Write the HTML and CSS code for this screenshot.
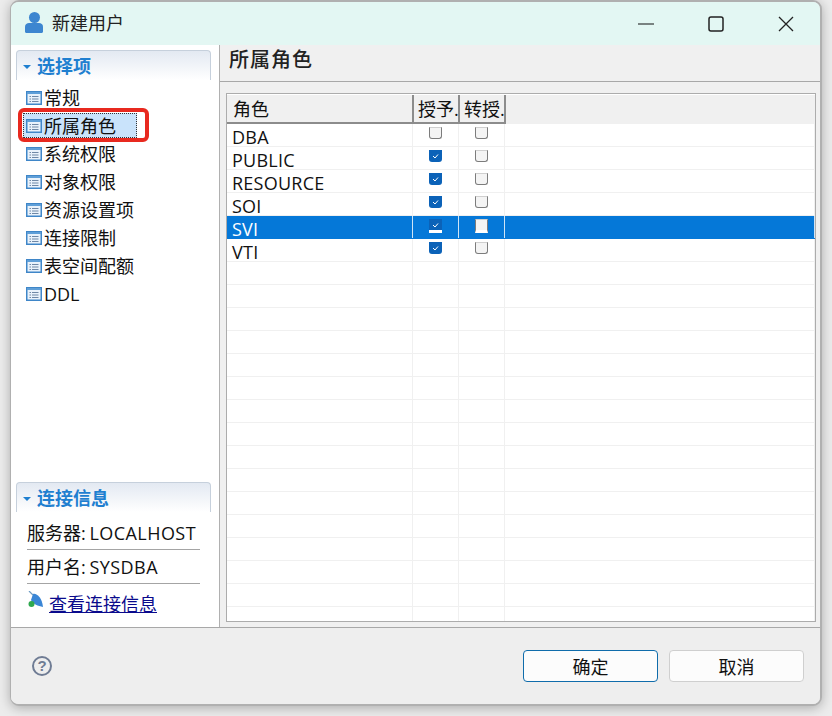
FILE: index.html
```html
<!DOCTYPE html>
<html lang="zh">
<head>
<meta charset="utf-8">
<title>新建用户</title>
<link rel="stylesheet" href="styles.css">
</head>
<body>
<svg class="defs" width="0" height="0" aria-hidden="true">
  <symbol id="page" viewBox="0 0 16 14">
    <rect x=".75" y=".75" width="14.500" height="12.500" fill="#e9f2fb" stroke="#3f86c8" stroke-width="1.500"/>
    <rect x="1" y="1" width="14" height="2" fill="#5f9fd8"/>
    <path d="M3.500 5.500h1.500M6 5.500h6.500M3.500 8h1.500M6 8h6.500M3.500 10.500h1.500M6 10.500h6.500" stroke="#6f88a6"/>
  </symbol>
  <symbol id="tick" viewBox="0 0 13 12">
    <path d="M4 6l2 2 3-3.500" fill="none" stroke="#fff" stroke-width="1"/>
  </symbol>
</svg>
<div class="window">
  <header class="titlebar">
    <svg class="user-icon" width="18" height="21" viewBox="0 0 18 21"><ellipse cx="9.500" cy="5.500" rx="5.500" ry="5.500" fill="#3d86d0"/><path d="M0 14.500C0 12.500 2 11 4 11h10c2 0 4 1.500 4 3.500V19.500c0 .8-.6 1.500-1.500 1.500h-15C.6 21 0 20.300 0 19.500z" fill="#3d86d0"/></svg>
    <span class="title">新建用户</span>
    <div class="win-controls">
      <svg width="16" height="16" viewBox="0 0 16 16" class="ctl-min"><path d="M0 8h16" stroke="#111" stroke-width="1.200"/></svg>
      <svg width="16" height="16" viewBox="0 0 16 16" class="ctl-max"><rect x="1" y="1" width="14" height="14" rx="2" fill="none" stroke="#222" stroke-width="1.500"/></svg>
      <svg width="16" height="16" viewBox="0 0 16 16" class="ctl-close"><path d="M1 1l14 14M15 1L1 15" stroke="#222" stroke-width="1.300"/></svg>
    </div>
  </header>
  <div class="body">
    <aside class="side">
      <div class="section-head"><span class="caret"></span>选择项</div>
      <ul class="nav">
        <li class="nav-item"><svg class="page"><use href="#page"/></svg><span class="nav-text">常规</span></li>
        <li class="nav-item active"><svg class="page"><use href="#page"/></svg><span class="nav-text">所属角色</span></li>
        <li class="nav-item"><svg class="page"><use href="#page"/></svg><span class="nav-text">系统权限</span></li>
        <li class="nav-item"><svg class="page"><use href="#page"/></svg><span class="nav-text">对象权限</span></li>
        <li class="nav-item"><svg class="page"><use href="#page"/></svg><span class="nav-text">资源设置项</span></li>
        <li class="nav-item"><svg class="page"><use href="#page"/></svg><span class="nav-text">连接限制</span></li>
        <li class="nav-item"><svg class="page"><use href="#page"/></svg><span class="nav-text">表空间配额</span></li>
        <li class="nav-item"><svg class="page"><use href="#page"/></svg><span class="nav-text">DDL</span></li>
      </ul>
      <div class="section-head"><span class="caret"></span>连接信息</div>
      <div class="info-line first">服务器: <span class="latin">LOCALHOST</span></div>
      <div class="info-line">用户名: <span class="latin">SYSDBA</span></div>
      <div class="info-link">
        <svg class="link-icon" width="16" height="17" viewBox="0 0 16 17"><path d="M5 3C9 2 14 7 15 16 10 15 5 13 3 9z" fill="#3a86d6"/><path d="M1 0l4 4" fill="none" stroke="#6f9cc4" stroke-width="1.200"/><circle cx="3.500" cy="13" r="3" fill="#2fa84f"/></svg>
        <a href="#">查看连接信息</a>
      </div>
    </aside>
    <main class="main">
      <h2 class="page-title">所属角色</h2>
      <div class="table">
        <div class="thead">
          <div class="th th-role">角色</div>
          <div class="th th-c">授予.</div>
          <div class="th th-c">转授.</div>
        </div>
        <div class="row"><span class="c-role">DBA</span><span class="c-chk"><i class="box"></i></span><span class="c-chk"><i class="box"></i></span><span></span></div>
        <div class="row"><span class="c-role">PUBLIC</span><span class="c-chk"><i class="box on"><svg><use href="#tick"/></svg></i></span><span class="c-chk"><i class="box"></i></span><span></span></div>
        <div class="row"><span class="c-role">RESOURCE</span><span class="c-chk"><i class="box on"><svg><use href="#tick"/></svg></i></span><span class="c-chk"><i class="box"></i></span><span></span></div>
        <div class="row"><span class="c-role">SOI</span><span class="c-chk"><i class="box on"><svg><use href="#tick"/></svg></i></span><span class="c-chk"><i class="box"></i></span><span></span></div>
        <div class="row selected"><span class="c-role">SVI</span><span class="c-chk"><i class="box on"><svg><use href="#tick"/></svg></i></span><span class="c-chk"><i class="box"></i></span><span></span></div>
        <div class="row"><span class="c-role">VTI</span><span class="c-chk"><i class="box on"><svg><use href="#tick"/></svg></i></span><span class="c-chk"><i class="box"></i></span><span></span></div>
        <div class="row"><span></span><span></span><span></span><span></span></div>
        <div class="row"><span></span><span></span><span></span><span></span></div>
        <div class="row"><span></span><span></span><span></span><span></span></div>
        <div class="row"><span></span><span></span><span></span><span></span></div>
        <div class="row"><span></span><span></span><span></span><span></span></div>
        <div class="row"><span></span><span></span><span></span><span></span></div>
        <div class="row"><span></span><span></span><span></span><span></span></div>
        <div class="row"><span></span><span></span><span></span><span></span></div>
        <div class="row"><span></span><span></span><span></span><span></span></div>
        <div class="row"><span></span><span></span><span></span><span></span></div>
        <div class="row"><span></span><span></span><span></span><span></span></div>
        <div class="row"><span></span><span></span><span></span><span></span></div>
        <div class="row"><span></span><span></span><span></span><span></span></div>
        <div class="row"><span></span><span></span><span></span><span></span></div>
        <div class="row"><span></span><span></span><span></span><span></span></div>
        <div class="row"><span></span><span></span><span></span><span></span></div>
      </div>
    </main>
  </div>
  <footer class="footer">
    <span class="help">?</span>
    <div class="buttons">
      <button class="btn default">确定</button>
      <button class="btn">取消</button>
    </div>
  </footer>
</div>
</body>
</html>
```
FILE: styles.css
```css
*, *::before, *::after { box-sizing: border-box; }
html, body { margin: 0; height: 100%; }
body {
  width: 832px;
  height: 716px;
  overflow: hidden;
  padding: 0 10px 10px;
  background: #ececec;
  font-family: "Open Sans", "Noto Sans CJK SC", sans-serif;
  font-size: 18px;
  color: #111;
}
.defs { position: absolute; }
.window {
  width: 812px;
  height: 706px;
  display: flex;
  flex-direction: column;
  border: 1px solid #b0b0b0;
  border-top-width: 2px;
  border-bottom-width: 2px;
  border-right-width: 2px;
  border-radius: 9px;
  background: #f0f0f0;
  overflow: hidden;
  box-shadow: 0 2px 12px rgba(0,0,0,.28);
}
.titlebar {
  height: 43px;
  flex: none;
  display: flex;
  align-items: center;
  padding: 0 26px 0 14px;
  background: #e3f7f3;
}
.user-icon { margin-right: 9px; margin-top: -3px; }
.title { font-size: 18px; color: #222; line-height: 1; margin-top: -2px; }
.win-controls { margin-left: auto; display: flex; align-items: center; }
.ctl-min { margin-right: 54px; }
.ctl-max { margin-right: 54px; }
.body { flex: 1; min-height: 0; display: flex; }
.side {
  width: 208px;
  flex: none;
  background: #fff;
  padding: 5px 8px 0 5px;
  display: flex;
  flex-direction: column;
}
.section-head {
  height: 30px;
  flex: none;
  border: 1px solid #c6d0dc;
  border-bottom: 0;
  border-radius: 4px 4px 0 0;
  background: linear-gradient(#e3e9f2, #fff);
  color: #1f7fd0;
  font-weight: 700;
  font-size: 18px;
  line-height: 28px;
  padding-left: 6px;
  display: flex;
  align-items: center;
}
.caret {
  width: 0;
  height: 0;
  margin-right: 6px;
  margin-top: 2px;
  border-left: 4px solid transparent;
  border-right: 4px solid transparent;
  border-top: 4px solid #1f7fd0;
}
.nav { list-style: none; margin: 0; padding: 4px 0 0 10px; flex: 1; }
.nav-item {
  height: 28px;
  display: flex;
  align-items: center;
  line-height: 28px;
  white-space: nowrap;
  position: relative;
}
.page { width: 16px; height: 14px; margin-right: 2px; flex: none; position: relative; z-index: 1; }
.nav-text { position: relative; z-index: 1; }
.nav-item.active::before {
  content: "";
  position: absolute;
  left: -8px;
  top: -4px;
  width: 131px;
  height: 34px;
  border: 4px solid #e8291f;
  border-radius: 6px;
  z-index: 2;
}
.nav-item.active::after {
  content: "";
  position: absolute;
  left: -3px;
  top: 1px;
  width: 114px;
  height: 25px;
  background: #c9e3fb;
  outline: 1px dotted #333;
  outline-offset: -1px;
}
.info-line {
  margin: 0 11px;
  height: 34px;
  line-height: 34px;
  white-space: nowrap;
  border-bottom: 1px solid #a4a4a4;
}
.info-line.first { margin-top: 4px; }
.latin { letter-spacing: .45px; margin-left: -1px; }
.info-link {
  display: flex;
  align-items: center;
  gap: 5px;
  margin-left: 12px;
  height: 38px;
  margin-bottom: 5px;
}
.link-icon { margin-bottom: 8px; }
.info-link a { color: #0a0a8c; text-decoration: underline; }
.main {
  flex: 1;
  min-width: 0;
  border-left: 1px solid #b0b0b0;
  display: flex;
  flex-direction: column;
  padding-bottom: 5px;
}
.page-title {
  margin: 0;
  height: 37px;
  flex: none;
  font-size: 20px;
  font-weight: 500;
  letter-spacing: 1px;
  line-height: 30px;
  padding-left: 9px;
  border-bottom: 1px solid #a8a8a8;
  color: #222;
}
.table {
  margin: 11px 4px 0 6px;
  flex: 1;
  min-height: 0;
  border: 1px solid #acacac;
  background: #fff;
  overflow: hidden;
}
.thead {
  height: 30px;
  display: flex;
  background: #f0f0f0;
  border-top: 1px solid #fff;
}
.th {
  height: 29px;
  border-right: 2px solid #8c8c8c;
  border-bottom: 2px solid #8c8c8c;
  line-height: 29px;
  overflow: hidden;
  white-space: nowrap;
}
.th-role { width: 187px; padding-left: 6px; }
.th-c { width: 46px; padding-left: 4px; }
.row {
  display: grid;
  grid-template-columns: 186px 46px 46px 1fr;
  height: 23px;
  border-bottom: 1px solid #f0f0f0;
}
.row > span { border-right: 1px solid #f0f0f0; }
.c-role { padding: 1px 0 0 5px; line-height: 24px; height: 22px; white-space: nowrap; letter-spacing: .25px; }
.c-chk { display: flex; justify-content: center; padding-top: 3px; }
.box {
  display: block;
  width: 13px;
  height: 12px;
  background: #f4f4f4;
  border: 1px solid #7c7c7c;
  border-top-color: #cfcfcf;
  border-radius: 0 0 3px 3px;
}
.box.on { background: #0b62b8; border: 0; }
.box svg { display: block; width: 13px; height: 12px; }
.row.selected { background: #0578d8; color: #fff; border-bottom-color: #0578d8; }
.row.selected > span { border-right-color: #cfe4f6; }
.row.selected .box { border-bottom: 3px solid #fff; height: 14px; border-radius: 0; }
.footer {
  height: 77px;
  flex: none;
  border-top: 1px solid #a8a8a8;
  display: flex;
  align-items: center;
  padding: 0 16px 0 21px;
  background: #eeeeee;
}
.help {
  width: 20px;
  height: 20px;
  border: 2px solid #6f7c94;
  border-radius: 50%;
  color: #6f7c94;
  font-weight: 700;
  font-size: 15px;
  line-height: 16px;
  text-align: center;
  font-family: "Liberation Sans", sans-serif;
}
.buttons { margin-left: auto; display: flex; gap: 11px; }
.btn {
  width: 135px;
  height: 32px;
  border: 1px solid #cfcfcf;
  border-radius: 4px;
  background: #fcfcfc;
  font: inherit;
  color: #111;
  padding: 0;
}
.btn.default { border-color: #0f6cab; }
```
